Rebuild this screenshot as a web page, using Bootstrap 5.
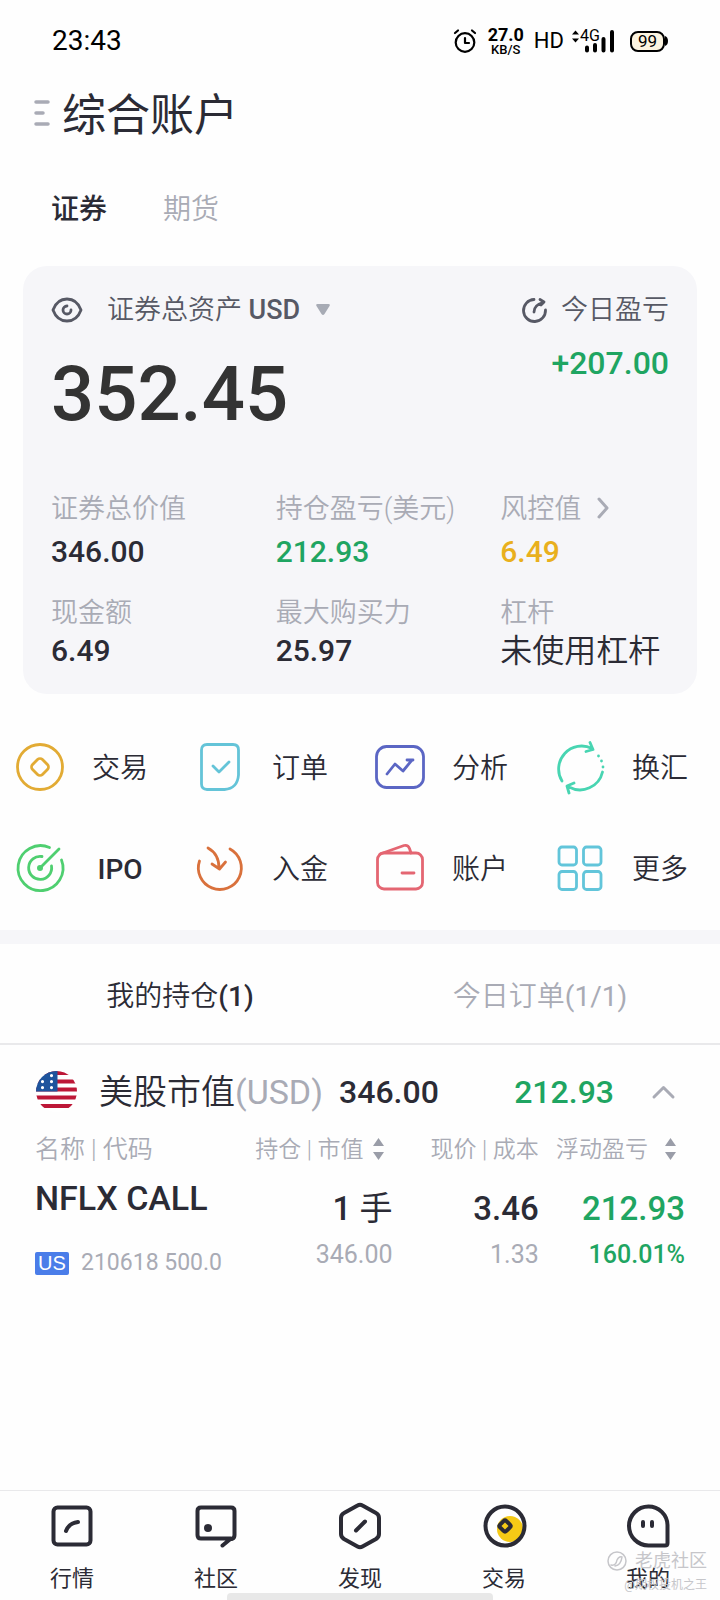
<!DOCTYPE html>
<html lang="zh-CN">
<head>
<meta charset="utf-8">
<meta name="viewport" content="width=device-width, initial-scale=1">
<title>综合账户</title>
<link href="https://cdn.jsdelivr.net/npm/bootstrap@5.3.0/dist/css/bootstrap.min.css" rel="stylesheet">
<style>
  body { font-family: Roboto, "Noto Sans CJK SC", sans-serif; font-weight: 350; color: #2b2b35; background: #fefefe; line-height: 1; }
  button { background: none; border: 0; padding: 0; color: inherit; font-weight: inherit; line-height: inherit; display: inline-flex; align-items: center; white-space: nowrap; }
  a { color: inherit; text-decoration: none; }
  svg { display: block; flex: none; overflow: visible; }
  .stroke { fill: none; stroke: currentColor; stroke-linecap: round; stroke-linejoin: round; }
  .muted { color: #a9abb5; }
  .slate { color: #575965; }
  .up { color: #1fa562; }
  .warn { color: #e9b01d; }
  .num { font-weight: 500; }
  .status { height: 82px; padding: 0 52px; color: #000; font-weight: 400; }
  .clock { font-size: 28px; }
  .speed { font-size: 18px; line-height: 16px; font-weight: 700; text-align: center; margin-left: 12px; }
  .speed div + div { font-size: 13px; line-height: 13px; font-weight: 500; }
  .hd { font-size: 22px; margin: 0 8px 0 10px; }
  .net { font-size: 16px; }
  .battery { width: 35px; height: 21px; border: 2px solid #000; border-radius: 8px; background: #fcf4e0; font-size: 17px; }
  .title-bar { height: 66px; padding-left: 34px; gap: 12px; }
  .title-bar h1 { font-size: 44px; font-weight: 400; padding-top: 2px; }
  .kinds { height: 118px; padding: 6px 0 0 51px; gap: 56px; font-size: 28px; }
  .asset { margin: 0 23px; background: #f6f6f9; border-radius: 24px; padding: 28px 0 26px; }
  .asset-head { padding: 0 28px; height: 32px; font-size: 27px; }
  .asset-sum { padding: 0 28px; height: 162px; }
  .total { font-size: 76px; color: #333; line-height: 76px; padding-top: 30px; }
  .today { font-size: 32px; padding-top: 21px; line-height: 32px; }
  .fact { padding-left: 28px; font-size: 27px; line-height: 42px; white-space: nowrap; }
  .fact dt { font-weight: inherit; height: 42px; }
  .fact dd { font-size: 30px; line-height: 34px; height: 34px; margin: 0; }
  .fact .wide { font-size: 32px; }
  .fact.first dd { height: 44px; line-height: 44px; }
  .facts { row-gap: 18px; }
  .actions { padding-top: 22px; }
  .action { height: 101px; padding-right: 20px; font-size: 28px; }
  .action > * { width: 80px; display: flex; justify-content: center; }
  .action > * + * { padding-top: 4px; }
  .band { height: 14px; background: #f6f6f9; margin-top: 12px; }
  .tabs { height: 101px; border-bottom: 2px solid #e9e9eb; font-size: 28px; padding-top: 6px; }
  .group { height: 91px; padding: 2px 45px 0 36px; font-size: 34px; white-space: nowrap; }
  .group .num { font-size: 32px; }
  .group .label { margin-left: 22px; }
  .group .fold { margin-left: 38px; }
  .hold { margin: 0 35px; }
  .hold table { width: 100%; table-layout: fixed; font-size: 25px; white-space: nowrap; text-align: right; }
  .hold th { font-weight: inherit; font-size: 23px; height: 26px; padding: 0; }
  .hold th:first-child { font-size: 25px; }
  .hold th:first-child, .hold td:first-child { text-align: left; width: 32.5%; }
  .hold td { padding: 0; vertical-align: top; }
  .hold td > div { height: 46px; line-height: 46px; }
  .hold .big { font-size: 33px; font-weight: 500; }
  .hold .ticker { font-size: 34px; margin-top: 13px; }
  .hold .amount { margin-top: 24px; }
  .hold .series { margin-top: 19px; }
  .flagtag { background: #4a7de9; color: #fff; font: 400 20px/23px "Liberation Sans", sans-serif; width: 34px; border-radius: 2px; text-align: center; }
  .code { font-size: 23px; font-weight: 400; }
  .dock { height: 110px; border-top: 1px solid #e9e9eb; background: #fefefe; font-size: 22px; font-weight: 400; overflow: hidden; }
  .dock a { padding-top: 12px; gap: 19px; }
  .home { bottom: 0; left: 50%; width: 37%; height: 7px; margin-left: -18.5%; border-radius: 4px 4px 0 0; background: #e8e8e8; }
  .mark-by { right: 13px; bottom: 3px; color: #c6c6ca; text-align: right; font-weight: 400; }
  .mark-by .name { font-size: 18px; line-height: 24px; gap: 8px; }
  .mark-by .user { font-size: 12px; line-height: 24px; }
</style>
</head>
<body>
<div class="d-flex flex-column min-vh-100">
  <header>
    <div class="status d-flex align-items-center justify-content-between">
      <span class="clock">23:43</span>
      <div class="d-flex align-items-center">
        <svg class="stroke" width="22" height="24" viewBox="0 0 22 24" stroke-width="2.2"><circle cx="11" cy="13.500" r="9.300"/><path d="M11 9v5h4M1 4l3-2.500M21 4l-3-2.500"/></svg>
        <div class="speed"><div>27.0</div><div>KB/S</div></div>
        <span class="hd">HD</span>
        <div class="d-flex me-3">
          <svg width="42" height="24" viewBox="0 0 42 24"><path d="M0 5.500 3.500 1.500 7 5.500zM0 9.500 3.500 13.500 7 9.500z"/><g stroke="#000" stroke-width="4" stroke-linecap="round"><path d="M15 18.500v3M23 16v5.500M31.500 10v11.500M40 3v18.500"/></g><text class="net" x="8" y="12">4G</text></svg>
        </div>
        <div class="battery d-flex align-items-center justify-content-center">99</div><svg width="3" height="10"><path d="M0 0Q3 1 3 5T0 10z"/></svg>
      </div>
    </div>
    <div class="title-bar d-flex align-items-center">
      <button type="button" aria-label="菜单" class="muted"><svg class="stroke" width="16" height="28" viewBox="0 0 16 28" stroke-width="3.500"><path d="M2 1h12M2 12h7M2 23h12"/></svg></button>
      <h1 class="m-0">综合账户</h1>
    </div>
    <nav class="kinds d-flex align-items-center">
      <a href="#" class="num">证券</a><a href="#" class="muted">期货</a>
    </nav>
  </header>

  <main>
    <section class="asset">
      <div class="asset-head slate d-flex align-items-center justify-content-between">
        <div class="d-flex align-items-center">
          <button type="button" aria-label="隐藏金额" class="me-4"><svg class="stroke" width="32" height="26" viewBox="0 0 32 26" stroke-width="2.800"><path d="M2 13Q6 2 16 2T30 13Q26 24 16 24T2 13Z"/><path d="M16 9a4 4 0 1 0 4 4"/></svg></button>
          <button type="button">证券总资产&nbsp;<span class="num">USD</span><svg class="ms-3" width="14" height="12" viewBox="0 0 14 12"><path d="M1.500 0h11q2 0 1 2L8.500 10q-1.500 2-3 0L.5 2q-1-2 1-2z" fill="#a7abb5"/></svg></button>
        </div>
        <div class="d-flex align-items-center">
          <svg class="stroke me-3" width="23" height="25" viewBox="0 0 23 25" stroke-width="2.800"><path d="M12 1.500A11 11 0 1 0 23.500 12M12 14Q12 7 21 4.500M18 1.500l4 2.500-3 3"/></svg>
          今日盈亏
        </div>
      </div>
      <div class="asset-sum d-flex justify-content-between">
        <div class="total num">352.45</div>
        <div class="today num up">+207.00</div>
      </div>
      <dl class="facts row row-cols-3 g-0 m-0">
        <div class="col fact first"><dt class="muted">证券总价值</dt><dd class="num">346.00</dd></div>
        <div class="col fact first"><dt class="muted">持仓盈亏(美元)</dt><dd class="num up">212.93</dd></div>
        <div class="col fact first"><dt class="muted d-flex align-items-center">风控值<svg class="stroke ms-3" width="14" height="20" viewBox="0 0 14 20" stroke-width="3"><path d="M2 0l8 9-8 9"/></svg></dt><dd class="num warn">6.49</dd></div>
        <div class="col fact"><dt class="muted">现金额</dt><dd class="num">6.49</dd></div>
        <div class="col fact"><dt class="muted">最大购买力</dt><dd class="num">25.97</dd></div>
        <div class="col fact"><dt class="muted">杠杆</dt><dd class="wide">未使用杠杆</dd></div>
      </dl>
    </section>

    <nav class="actions row row-cols-4 g-0">
      <a href="#" class="col action d-flex align-items-center"><span><svg class="stroke" color="#e2ab34" width="48" height="48" viewBox="0 0 48 48" stroke-width="2.800"><circle cx="24" cy="24" r="22.500"/><rect x="17" y="17" width="14" height="14" rx="3.500" transform="rotate(45 24 24)"/></svg></span><span>交易</span></a>
      <a href="#" class="col action d-flex align-items-center"><span><svg class="stroke" color="#64c4d8" width="40" height="48" viewBox="0 0 40 48" stroke-width="2.800"><path d="M7 1.500h26q5.500 0 5.500 5.500v25q-1 13.500-14 14.500H7q-5.500 0-5.500-5.500V7q0-5.500 5.500-5.500Z"/><path d="M13 23l6 6 10-10"/></svg></span><span>订单</span></a>
      <a href="#" class="col action d-flex align-items-center"><span><svg class="stroke" color="#5b66c4" width="50" height="44" viewBox="0 0 50 44" stroke-width="2.800"><rect x="1.500" y="1.500" width="47" height="41" rx="10"/><path d="M12 29l8-10 8 7 9-11M32 15h6"/></svg></span><span>分析</span></a>
      <a href="#" class="col action d-flex align-items-center"><span><svg class="stroke" color="#48d5b2" width="48" height="52" viewBox="0 0 48 52" stroke-width="2.800"><path d="M6 40A23 23 0 0 1 36 7.500M34 1.500l3 7-7 2M46.500 31A23 23 0 0 1 13 46M18 42l-7 3 2 7"/><path d="M42.500 15v.1M45.500 20v.1M47 26v.1"/></svg></span><span>换汇</span></a>
      <a href="#" class="col action d-flex align-items-center"><span><svg class="stroke" color="#4fcf70" width="48" height="48" viewBox="0 0 48 48" stroke-width="2.800"><path d="M33.500 3.500A22.500 22.500 0 1 0 45.500 16M26 12.500A11.500 11.500 0 1 0 35.500 22M24 24L43 5"/><circle cx="24" cy="24" r="1.600" fill="currentColor"/></svg></span><span class="num">IPO</span></a>
      <a href="#" class="col action d-flex align-items-center"><span><svg class="stroke" color="#d9713c" width="46" height="48" viewBox="0 0 46 48" stroke-width="2.800"><path d="M33 5A21.500 21.500 0 1 1 2.500 17M11 4Q22 10 22 24M15 20l7.500 5 6-7"/></svg></span><span>入金</span></a>
      <a href="#" class="col action d-flex align-items-center"><span><svg class="stroke" color="#e46672" width="48" height="48" viewBox="0 0 48 48" stroke-width="2.800"><rect x="1.500" y="9" width="45" height="36" rx="6.500"/><path d="M4 10L28 1.500q4-1 5.500 3l1.500 4.500M26 29h12"/></svg></span><span>账户</span></a>
      <a href="#" class="col action d-flex align-items-center"><span><svg class="stroke" color="#62c5da" width="46" height="46" viewBox="0 0 46 46" stroke-width="2.800"><rect x="2" y="2" width="17.500" height="18" rx="3"/><rect x="26.500" y="2" width="17.500" height="18" rx="3"/><rect x="2" y="26.500" width="17.500" height="18" rx="3"/><rect x="26.500" y="26.500" width="17.500" height="18" rx="3"/></svg></span><span>更多</span></a>
    </nav>

    <div class="band"></div>
    <nav class="tabs row g-0 align-items-center text-center">
      <a href="#" class="col">我的持仓<span class="num">(1)</span></a>
      <a href="#" class="col muted">今日订单<span class="fw-normal">(1/1)</span></a>
    </nav>

    <section>
      <div class="group d-flex align-items-center">
        <svg width="41" height="41" viewBox="0 0 41 41"><defs><clipPath id="disc"><circle cx="20.500" cy="20.500" r="20.500"/></clipPath></defs><g clip-path="url(#disc)"><path fill="#fff" d="M0 0h41v41H0z"/><path stroke="#bd1737" stroke-width="4.200" d="M0 2h41M0 10.500h41M0 18.500h41M0 26.500h41M0 35h41"/><path fill="#1e549d" d="M0 0h21.500v20.500H0z"/><path stroke="#fff" stroke-width="3.200" stroke-linecap="round" d="M15.500 4.500v.1M6.500 10.500v.1M15.500 10.500v.1M6.500 16.500v.1M15.500 16.500v.1"/></g></svg>
        <span class="label">美股市值<span class="muted fw-normal">(USD)</span></span>
        <span class="num ms-3">346.00</span>
        <span class="num up ms-auto">212.93</span>
        <button type="button" aria-label="收起" class="muted fold"><svg class="stroke" width="23" height="14" viewBox="0 0 23 14" stroke-width="3"><path d="M2 12l9.500-9.500L21 12"/></svg></button>
      </div>
      <div class="hold">
        <table>
          <thead class="muted"><tr>
            <th scope="col">名称 | 代码</th>
            <th scope="col"><button type="button" class="pe-2">持仓 | 市值<svg class="ms-2" width="13" height="22" viewBox="0 0 13 22" fill="#9a9da8"><path d="M6.500 0L12 8H1zM6.500 22L12 14H1z"/></svg></button></th>
            <th scope="col">现价 | 成本</th>
            <th scope="col"><button type="button" class="pe-2">浮动盈亏<svg class="ms-3" width="13" height="22" viewBox="0 0 13 22" fill="#9a9da8"><path d="M6.500 0L12 8H1zM6.500 22L12 14H1z"/></svg></button></th>
          </tr></thead>
          <tbody><tr>
            <td><div class="big ticker">NFLX CALL</div><div class="d-flex align-items-center muted series"><span class="flagtag me-2">US</span><span class="code ms-1">210618 500.0</span></div></td>
            <td><div class="big amount">1 <span class="fw-normal">手</span></div><div class="muted fw-normal">346.00</div></td>
            <td><div class="big amount">3.46</div><div class="muted fw-normal">1.33</div></td>
            <td class="up"><div class="big amount">212.93</div><div class="num">160.01%</div></td>
          </tr></tbody>
        </table>
      </div>
    </section>
  </main>

  <footer class="dock mt-auto position-relative">
    <nav class="row row-cols-5 g-0">
      <a href="#" class="col d-flex flex-column align-items-center"><svg class="stroke" width="44" height="46" viewBox="0 0 44 46" stroke-width="4"><rect x="3.500" y="4.500" width="37" height="37" rx="4"/><path d="M16 28q3-8 12-9"/></svg>行情</a>
      <a href="#" class="col d-flex flex-column align-items-center"><svg class="stroke" width="44" height="46" viewBox="0 0 44 46" stroke-width="4"><path d="M38 36q2.500-1 2.500-4V8q0-3.500-3.500-3.500H7Q3.500 4.500 3.500 8v24q0 3.500 3.500 3.500h30l-8.500 7"/><circle cx="14" cy="25" r="2" fill="currentColor"/></svg>社区</a>
      <a href="#" class="col d-flex flex-column align-items-center"><svg class="stroke" width="44" height="46" viewBox="0 0 44 46" stroke-width="4"><path d="M19.500 2.500q2.500-1.500 5 0L38 10q3 1.500 3 5v16q0 3-3 5l-13.500 7.500q-2.500 1.500-5 0L6 36q-3-2-3-5V15q0-3.500 3-5zM18 27.500l9-9"/></svg>发现</a>
      <a href="#" class="col d-flex flex-column align-items-center"><svg class="stroke" width="44" height="46" viewBox="0 0 44 46" stroke-width="4"><circle cx="28" cy="26" r="13" fill="#f5ca16" stroke="none"/><circle cx="23" cy="23" r="19.500"/><rect x="18.500" y="18.500" width="9" height="9" rx="2" transform="rotate(45 23 23)"/></svg>交易</a>
      <a href="#" class="col d-flex flex-column align-items-center"><svg class="stroke" width="44" height="46" viewBox="0 0 44 46" stroke-width="4"><path d="M22.500 3.500A19 19 0 0 1 41.500 22V40q0 2.500-2.500 2.500H22.500a19.500 19.500 0 0 1 0-39ZM17 19v4M26 19v4"/></svg>我的</a>
    </nav>
    <div class="home position-absolute"></div>
    <div class="mark-by position-absolute">
      <div class="name d-flex align-items-center"><svg class="stroke" width="20" height="20" viewBox="0 0 20 20" stroke-width="1.500"><circle cx="10" cy="10" r="9"/><path d="M4 14Q9 15 10 9q2-4 5-3-1 8-7 9"/></svg>老虎社区</div>
      <div class="user">@期权投机之王</div>
    </div>
  </footer>
</div>
<script src="https://cdn.jsdelivr.net/npm/bootstrap@5.3.0/dist/js/bootstrap.bundle.min.js"></script>
</body>
</html>
